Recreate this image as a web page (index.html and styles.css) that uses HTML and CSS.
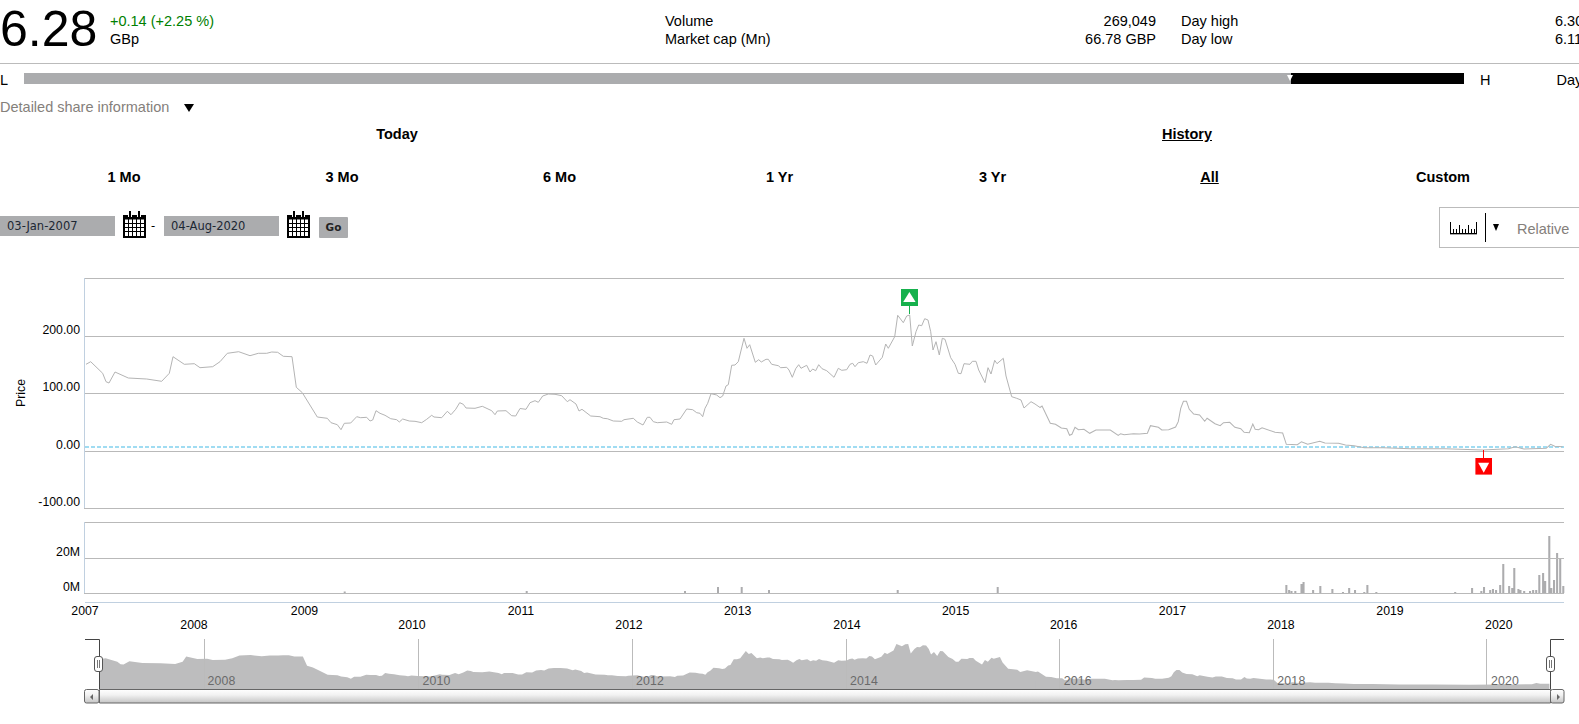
FILE: index.html
```html
<!DOCTYPE html>
<html lang="en">
<head>
    <meta charset="UTF-8">
    <title>Share price</title>
    <link rel="stylesheet" href="styles.css">
</head>
<body>
    <svg class="defs" width="0" height="0">
        <symbol id="calendar" viewBox="0 0 23 27">
            <path d="M0 4h23v4.5H0z" fill="#000"/>
            <path d="M7 0v6M16 0v6" stroke="#fff" stroke-width="4"/>
            <path d="M7 0v6M16 0v6" stroke="#000" stroke-width="2"/>
            <path d="M1 8v18h21V8" fill="none" stroke="#000" stroke-width="2"/>
            <path d="M5.5 8v18M9.5 8v18M13.5 8v18M17.5 8v18M1 12.5h21M1 16.5h21M1 20.5h21" stroke="#000" fill="none"/>
        </symbol>
    </svg>

    <div class="quote">
        <div class="price">6.28</div>
        <div class="change">
            <div class="up">+0.14 (+2.25 %)</div>
            <div>GBp</div>
        </div>
        <div class="labels">
            <div>Volume</div>
            <div>Market cap (Mn)</div>
        </div>
        <div class="values">
            <div>269,049</div>
            <div>66.78 GBP</div>
        </div>
        <div class="labels day-labels">
            <div>Day high</div>
            <div>Day low</div>
        </div>
        <div class="values day-values">
            <div>6.30</div>
            <div>6.11</div>
        </div>
    </div>

    <div class="range">
        <span>L</span>
        <div class="range-bar">
            <div class="range-fill"></div>
            <div class="range-mark"></div>
        </div>
        <span class="range-high">H</span>
        <span class="range-day">Day</span>
    </div>

    <div class="details">Detailed share information<span class="arrow"></span></div>

    <div class="tabs">
        <a>Today</a>
        <a class="active">History</a>
    </div>

    <div class="periods">
        <a>1 Mo</a>
        <a>3 Mo</a>
        <a>6 Mo</a>
        <a>1 Yr</a>
        <a>3 Yr</a>
        <a class="active">All</a>
        <a>Custom</a>
    </div>

    <div class="dates">
        <span class="date-field">03-Jan-2007</span>
        <svg class="cal"><use href="#calendar"/></svg>
        <span class="dash">-</span>
        <span class="date-field">04-Aug-2020</span>
        <svg class="cal"><use href="#calendar"/></svg>
        <span class="go">Go</span>
        <div class="chart-type">
            <svg class="ruler" width="27" height="14" viewBox="0 0 27 14">
                <path d="M0 12.5h27" stroke="#000"/>
                <path d="M0 13.5h27" stroke="#aaa"/>
                <path d="M.5 1v11M3.5 8v4M6.5 8v4M9.5 4v8M12.5 8v4M15.5 8v4M18.5 4v8M21.5 8v4M24.5 8v4M26.5 1v11" stroke="#000" fill="none"/>
            </svg>
            <span class="divider"></span>
            <span class="small-arrow"></span>
            <span class="relative">Relative</span>
        </div>
    </div>

    <svg class="chart" width="1579" height="454" viewBox="0 270 1579 454">
        <!-- price panel -->
        <path class="grid" d="M84 278.5H1564M84 336.5H1564M84 393.5H1564M84 451.5H1564M84 508.5H1564"/>
        <path class="axis" d="M84.5 278V508"/>
        <path class="zero" d="M85 447H1564"/>
        <polyline class="line" points="86,364.3 90.7,361.7 102.7,373.3 106,381.7 109,383 115,372 128.3,378 146.7,379 161.7,381.3 169.3,373.3 173,356.7 184.3,364.3 194.3,363.7 200,367.7 212.7,366.7 220,361.7 227.3,353.3 238.7,351.7 250,355.7 258.3,353.3 266.7,353.3 271.7,352 277.7,352.3 283.3,356.3 292,356.7 296.3,387.3 302.3,392.7 317.3,417 327.3,418.3 331,422.7 337.3,424.7 341,429.7 344.3,423.3 350.7,423 356.7,416.7 360.7,417.7 366.7,417.3 370,421 372.7,420 376,410.7 380,413.3 385,415.3 390.7,418.7 396.7,419.7 399.3,422 402.7,419 409.3,421 415,421.3 421.7,422.7 426.7,419.3 431.7,415.3 434,417 441.7,417.7 447.3,411.3 451,414.7 455.7,409.3 459.7,402.7 463.3,404.3 466,408 475,408.3 482.3,406.3 491.7,410.7 495,414.7 497.3,411 506,410.7 511.7,415.7 515.7,416 520,408.5 526,409.3 530,402.7 535,400.7 538.3,402.3 542.7,396 548.3,394 555,394.3 561.7,395.7 567.3,401.7 570,399.7 576,404 579,411 582,409.3 590.7,416 600,416.7 603.3,418.3 607.3,418.7 613.3,421 621.7,421.3 624,419.7 633.3,418.3 637.3,422 643,425 647.3,417.3 650,417.3 653.3,421.7 657.3,422.7 666.7,422 671.7,424.3 674,419.7 680,419 686.7,409 692.7,409.7 696.7,412.7 700,413.3 702.7,416.7 705,408.3 707.7,403.3 711,393.7 716.7,395 720,397.7 722.7,396 726,386 728.3,384.7 731.7,365.3 735,365 738.3,361.7 744,338.3 747,348.3 749.7,344.7 755.3,362.3 758.7,359.7 761.3,362 766,359.3 768.3,359.3 771.7,364.3 778.3,365.7 780.7,367.7 786.7,367.3 789,370 792.3,377.3 795.7,368.7 798.7,364.7 801,368.3 806.7,365.3 810,372 812.7,369 815.7,370.7 818.7,364.7 822,368.7 826.7,370.7 834,377.3 838.3,368.3 841.7,370.3 846.7,369.7 850,364.3 852.7,363.3 855,366.7 858.3,362.7 863.3,361.7 867,363.3 870,355 872.7,356 875.7,365 882.3,357.3 885.7,344 888.3,348.3 894.7,336.7 897.7,315.3 903.3,322.7 906.7,316 909.7,315 912.3,346 916,331.7 918.7,325 921.7,325.7 924.7,318.7 928,320 930.7,331.7 933,350 936,341.7 939.3,355 942.3,338.3 945,339.3 950.7,357.7 955,364.3 958.3,373.3 961,373.7 964,363.7 970,364.3 972.3,361.3 976,361.3 978.7,370 985,382.7 988,367.7 991,374 994.7,360.3 997,363.7 1003.3,358.3 1006,376 1011.7,396.7 1016.7,398.3 1021,400 1024,408 1031,401.7 1035,404 1040,407.5"/>

        <!-- the data right of 2015 was traced on a slightly narrower scale -->
        <g transform="translate(1040 0) scale(1.0295 1) translate(-1040 0)">
            <polyline class="line" points="1040,407.5 1042,406 1050,423.3 1055,424.3 1060.7,428 1066,428.7 1068.7,435.3 1071,434.3 1074,427.3 1077.3,429.7 1082.7,429.3 1088.3,433.3 1094.3,430 1108.3,430 1116,435.3 1118.3,433.7 1121.7,434.7 1130.7,433.7 1136.7,434 1144.3,433.3 1147.3,425.7 1155,427.3 1158.3,430 1165,429.7 1171.7,427 1174.3,421.7 1176.7,408.3 1179.3,401.3 1182.3,401.3 1185,409.3 1189.3,414 1195,415 1200,421.3 1202.3,418.3 1210,423.7 1215,425.7 1218.3,422.7 1224.3,422.3 1229.3,427.3 1235,428.7 1238.3,432.3 1243.3,432.7 1246.7,424 1249,429.3 1252.3,429.7 1255.7,427.7 1268.3,432.3 1275.7,433 1279.3,444.3 1290,444.7 1294,441.7 1300,444.3 1311.7,441.3 1316.7,443 1330,443.3 1336.7,445 1345,445.7 1355,447.7 1373.3,447.7 1400,448.7 1433.3,448.7 1470,450 1495,448.7 1501.7,446.7 1510,449 1531.7,448.3 1536,444.3 1540,446.3 1547.7,446.7"/>
            <path class="bars" d="M1279.3 593v-8M1282 593v-3M1284.3 593v-2M1288 593v-2M1294 593v-9M1296 593v-11M1305.3 593v-3M1312.3 593v-7M1324 593v-4M1334.3 593v-1M1340.3 593v-5M1346 593v-3M1355 593v-1M1358 593v-8M1366.7 593v-1M1443.3 593v-1M1459.7 593v-5M1468.7 593v-2M1471.3 593v-6M1477.3 593v-3M1480 593v-4M1483 593v-3M1487 593v-8M1490 593v-29M1495.7 593v-7M1498.7 593v-5M1500.7 593v-25M1504.7 593v-4M1506.7 593v-3M1510.3 593v-2M1516 593v-2M1519 593v-3M1522 593v-3M1525 593v-18M1528.7 593v-20M1530.7 593v-12M1534.7 593v-57M1536.7 593v-5M1539.3 593v-13M1542.3 593v-40M1545.3 593v-35M1548.3 593v-7"/>
        </g>

        <!-- high and low flags -->
        <path d="M909.5 306v8" stroke="#16b14d" stroke-width="1"/>
        <rect x="901" y="289" width="17" height="17" fill="#16b14d"/>
        <path d="M909.4 292l6.2 10h-12.4z" fill="#fff"/>
        <path d="M1483.5 450v8" stroke="#f00" stroke-width="1"/>
        <rect x="1475.4" y="458" width="16.6" height="16.6" fill="#f00"/>
        <path d="M1483.7 472.7l-5.5-10h11z" fill="#fff"/>

        <g class="label end">
            <text x="80" y="334">200.00</text>
            <text x="80" y="391">100.00</text>
            <text x="80" y="449">0.00</text>
            <text x="80" y="506">-100.00</text>
            <text x="80" y="556">20M</text>
            <text x="80" y="591">0M</text>
        </g>
        <text class="label" transform="translate(25 393) rotate(-90)" text-anchor="middle">Price</text>

        <!-- volume panel -->
        <path class="grid" d="M84 522.5H1564M84 558.5H1564M84 593.5H1564"/>
        <path class="axis" d="M84.5 522V593M85 602.5H1564"/>
        <path class="bars" d="M344.7 593v-1.5M526.7 593v-2M685 593v-2M718 593v-6M741.7 593v-6M769 593v-3M897.7 593v-3M997.7 593v-6"/>

        <g class="label middle">
            <text x="85" y="615">2007</text>
            <text x="194" y="629">2008</text>
            <text x="304.5" y="615">2009</text>
            <text x="412" y="629">2010</text>
            <text x="521" y="615">2011</text>
            <text x="629" y="629">2012</text>
            <text x="737.7" y="615">2013</text>
            <text x="847" y="629">2014</text>
            <text x="955.7" y="615">2015</text>
            <text x="1063.7" y="629">2016</text>
            <text x="1172.5" y="615">2017</text>
            <text x="1280.9" y="629">2018</text>
            <text x="1390" y="615">2019</text>
            <text x="1498.8" y="629">2020</text>
        </g>

        <!-- navigator: same price data, squeezed into the small panel -->
        <g transform="matrix(.98 0 0 .302 16.7 548.9)">
            <polygon class="area" points="84.5,464 84.5,364.3 86,364.3 90.7,361.7 102.7,373.3 106,381.7 109,383 115,372 128.3,378 146.7,379 161.7,381.3 169.3,373.3 173,356.7 184.3,364.3 194.3,363.7 200,367.7 212.7,366.7 220,361.7 227.3,353.3 238.7,351.7 250,355.7 258.3,353.3 266.7,353.3 271.7,352 277.7,352.3 283.3,356.3 292,356.7 296.3,387.3 302.3,392.7 317.3,417 327.3,418.3 331,422.7 337.3,424.7 341,429.7 344.3,423.3 350.7,423 356.7,416.7 360.7,417.7 366.7,417.3 370,421 372.7,420 376,410.7 380,413.3 385,415.3 390.7,418.7 396.7,419.7 399.3,422 402.7,419 409.3,421 415,421.3 421.7,422.7 426.7,419.3 431.7,415.3 434,417 441.7,417.7 447.3,411.3 451,414.7 455.7,409.3 459.7,402.7 463.3,404.3 466,408 475,408.3 482.3,406.3 491.7,410.7 495,414.7 497.3,411 506,410.7 511.7,415.7 515.7,416 520,408.5 526,409.3 530,402.7 535,400.7 538.3,402.3 542.7,396 548.3,394 555,394.3 561.7,395.7 567.3,401.7 570,399.7 576,404 579,411 582,409.3 590.7,416 600,416.7 603.3,418.3 607.3,418.7 613.3,421 621.7,421.3 624,419.7 633.3,418.3 637.3,422 643,425 647.3,417.3 650,417.3 653.3,421.7 657.3,422.7 666.7,422 671.7,424.3 674,419.7 680,419 686.7,409 692.7,409.7 696.7,412.7 700,413.3 702.7,416.7 705,408.3 707.7,403.3 711,393.7 716.7,395 720,397.7 722.7,396 726,386 728.3,384.7 731.7,365.3 735,365 738.3,361.7 744,338.3 747,348.3 749.7,344.7 755.3,362.3 758.7,359.7 761.3,362 766,359.3 768.3,359.3 771.7,364.3 778.3,365.7 780.7,367.7 786.7,367.3 789,370 792.3,377.3 795.7,368.7 798.7,364.7 801,368.3 806.7,365.3 810,372 812.7,369 815.7,370.7 818.7,364.7 822,368.7 826.7,370.7 834,377.3 838.3,368.3 841.7,370.3 846.7,369.7 850,364.3 852.7,363.3 855,366.7 858.3,362.7 863.3,361.7 867,363.3 870,355 872.7,356 875.7,365 882.3,357.3 885.7,344 888.3,348.3 894.7,336.7 897.7,315.3 903.3,322.7 906.7,316 909.7,315 912.3,346 916,331.7 918.7,325 921.7,325.7 924.7,318.7 928,320 930.7,331.7 933,350 936,341.7 939.3,355 942.3,338.3 945,339.3 950.7,357.7 955,364.3 958.3,373.3 961,373.7 964,363.7 970,364.3 972.3,361.3 976,361.3 978.7,370 985,382.7 988,367.7 991,374 994.7,360.3 997,363.7 1003.3,358.3 1006,376 1011.7,396.7 1016.7,398.3 1021,400 1024,408 1031,401.7 1035,404 1040,407.5 1041,408 1041,464"/>
            <g transform="translate(1040 0) scale(1.0295 1) translate(-1040 0)">
                <polygon class="area" points="1040,464 1040,407.5 1042,406 1050,423.3 1055,424.3 1060.7,428 1066,428.7 1068.7,435.3 1071,434.3 1074,427.3 1077.3,429.7 1082.7,429.3 1088.3,433.3 1094.3,430 1108.3,430 1116,435.3 1118.3,433.7 1121.7,434.7 1130.7,433.7 1136.7,434 1144.3,433.3 1147.3,425.7 1155,427.3 1158.3,430 1165,429.7 1171.7,427 1174.3,421.7 1176.7,408.3 1179.3,401.3 1182.3,401.3 1185,409.3 1189.3,414 1195,415 1200,421.3 1202.3,418.3 1210,423.7 1215,425.7 1218.3,422.7 1224.3,422.3 1229.3,427.3 1235,428.7 1238.3,432.3 1243.3,432.7 1246.7,424 1249,429.3 1252.3,429.7 1255.7,427.7 1268.3,432.3 1275.7,433 1279.3,444.3 1290,444.7 1294,441.7 1300,444.3 1311.7,441.3 1316.7,443 1330,443.3 1336.7,445 1345,445.7 1355,447.7 1373.3,447.7 1400,448.7 1433.3,448.7 1470,450 1495,448.7 1501.7,446.7 1510,449 1531.7,448.3 1536,444.3 1540,446.3 1549,446.7 1549,464"/>
            </g>
        </g>
        <path class="nav-grid" d="M204.5 639V689M418.5 639V689M632.5 639V689M846.5 639V689M1059.5 639V689M1273.5 639V689M1486.5 639V689"/>
        <g class="nav-label">
            <text x="207.5" y="685">2008</text>
            <text x="422.5" y="685">2010</text>
            <text x="636" y="685">2012</text>
            <text x="850" y="685">2014</text>
            <text x="1063.7" y="685">2016</text>
            <text x="1277.3" y="685">2018</text>
            <text x="1491" y="685">2020</text>
        </g>
        <path class="nav-edge" d="M85 639.5H99.5V689.5M1564 639.5H1550.5V689.5"/>
        <rect class="handle" x="94.5" y="656.5" width="8" height="15" rx="2.5"/>
        <rect class="handle" x="1546.5" y="656.5" width="8" height="15" rx="2.5"/>
        <path class="grip" d="M97.5 660v8M99.5 660v8M1549.5 660v8M1551.5 660v8M821.5 694v6M824 694v6M826.5 694v6"/>

        <!-- scrollbar -->
        <defs>
            <linearGradient id="scroll-fill" x1="0" y1="0" x2="0" y2="1">
                <stop offset="0" stop-color="#ffffff"/>
                <stop offset="0.4" stop-color="#f2f2f2"/>
                <stop offset="1" stop-color="#c4c4c4"/>
            </linearGradient>
        </defs>
        <path class="track" d="M99.5 689.5H1550.5V703H99.5z"/>
        <rect class="scroll-btn" x="84.5" y="689.5" width="14.5" height="13.5" rx="2"/>
        <rect class="scroll-btn" x="1550.5" y="689.5" width="13.5" height="13.5" rx="2"/>
        <path d="M93 694v6l-3-3zM1557 694v6l3-3z" fill="#666"/>
    </svg>
</body>
</html>
```

FILE: styles.css
```css
html, body {
    margin: 0;
    padding: 0;
    background: white;
}
body {
    width: 1579px;
    height: 724px;
    overflow: hidden;
    font-family: "Liberation Sans", Arial, sans-serif;
    font-size: 14.5px;
    line-height: 18px;
    color: #000;
}
.defs {
    position: absolute;
}
.quote {
    display: grid;
    grid-template-columns: 110px 555px 245px 246px 25px 374px 28px;
    height: 63px;
    border-bottom: 1px solid #bbb;
    white-space: nowrap;
}
.price {
    font-size: 50px;
    line-height: 58px;
}
.change, .labels, .values {
    padding-top: 12px;
}
.up {
    color: #008000;
}
.values {
    text-align: right;
}
.day-labels {
    grid-column: 6;
}
.day-values {
    text-align: left;
}
.range {
    display: flex;
    margin-top: 7px;
    white-space: nowrap;
}
.range-bar {
    position: relative;
    flex: none;
    width: 1440px;
    height: 11px;
    margin: 2px 0 0 16px;
    background: #abacae;
}
.range-fill {
    position: absolute;
    left: 1267px;
    right: 0;
    top: 0;
    bottom: 0;
    background: #000;
}
.range-mark {
    position: absolute;
    left: 1263px;
    top: 2px;
    border-left: 3.5px solid transparent;
    border-right: 3.5px solid transparent;
    border-top: 6px solid #fff;
}
.range-high {
    flex: none;
    margin-left: 16px;
}
.range-day {
    flex: none;
    margin-left: 66px;
}
.details {
    margin-top: 9px;
    color: #85807b;
    white-space: nowrap;
}
.arrow {
    display: inline-block;
    margin-left: 15px;
    border-left: 5.5px solid transparent;
    border-right: 5.5px solid transparent;
    border-top: 8px solid #000;
}
.tabs {
    display: grid;
    grid-template-columns: 790px 790px;
    margin: 9px 0 0 2px;
    text-align: center;
    font-weight: bold;
}
.active {
    text-decoration: underline;
}
.periods {
    display: grid;
    grid-template-columns: 218px 218px 217px 223px 203px 231px 236px;
    margin: 25px 0 0 15px;
    text-align: center;
    font-weight: bold;
}
.dates {
    display: flex;
    align-items: flex-start;
    margin-top: 21px;
    height: 40px;
    font-family: "DejaVu Sans", Verdana, sans-serif;
    font-size: 11.5px;
}
.date-field {
    width: 108px;
    height: 20px;
    margin-top: 9px;
    padding-left: 7px;
    line-height: 20px;
    background: #abacae;
    color: #1c2733;
}
.cal {
    width: 23px;
    height: 27px;
    margin: 4px 0 0 8px;
}
.dash {
    width: 18px;
    margin-top: 10px;
    padding-left: 5px;
    box-sizing: border-box;
}
.go {
    width: 29px;
    height: 21px;
    margin: 10px 0 0 9px;
    line-height: 21px;
    text-align: center;
    font-size: 10.5px;
    font-weight: bold;
    background: #abacae;
    color: #222;
    border-radius: 1px;
}
.chart-type {
    display: flex;
    align-items: center;
    box-sizing: border-box;
    width: 150px;
    height: 41px;
    margin: 0 -10px 0 auto;
    padding-left: 10px;
    border: 1px solid #bbb;
    font-family: "Liberation Sans", Arial, sans-serif;
    font-size: 14.5px;
}
.ruler {
    margin-top: 1px;
}
.divider {
    width: 1px;
    height: 29px;
    margin-left: 8px;
    background: #000;
}
.small-arrow {
    margin-left: 7px;
    border-left: 3.5px solid transparent;
    border-right: 3.5px solid transparent;
    border-top: 7px solid #000;
}
.relative {
    margin: 3px 0 0 18px;
    color: #85807b;
}
.chart {
    display: block;
    margin-top: 23px;
}
.grid {
    stroke: #b9b9b9;
    fill: none;
}
.axis {
    stroke: #c0d0e0;
    fill: none;
}
.zero {
    stroke: #a0dcf2;
    stroke-width: 2;
    stroke-dasharray: 4 2;
    fill: none;
}
.line {
    stroke: #b4b4b4;
    fill: none;
}
.bars {
    stroke: #acacae;
    stroke-width: 2;
    fill: none;
}
.label text, text.label {
    font-size: 12.3px;
    fill: #000;
}
.end {
    text-anchor: end;
}
.middle {
    text-anchor: middle;
}
.area {
    fill: #bdbdbe;
}
.nav-grid {
    stroke: #bbb;
    fill: none;
}
.nav-label text {
    font-size: 12.3px;
    letter-spacing: 0.2px;
    fill: #6a6a6a;
}
.nav-edge {
    stroke: #444;
    fill: none;
}
.handle {
    fill: #fff;
    stroke: #555;
}
.grip {
    stroke: #777;
    fill: none;
}
.track {
    fill: url(#scroll-fill);
    stroke: #666;
}
.scroll-btn {
    fill: url(#scroll-fill);
    stroke: #666;
}
```
